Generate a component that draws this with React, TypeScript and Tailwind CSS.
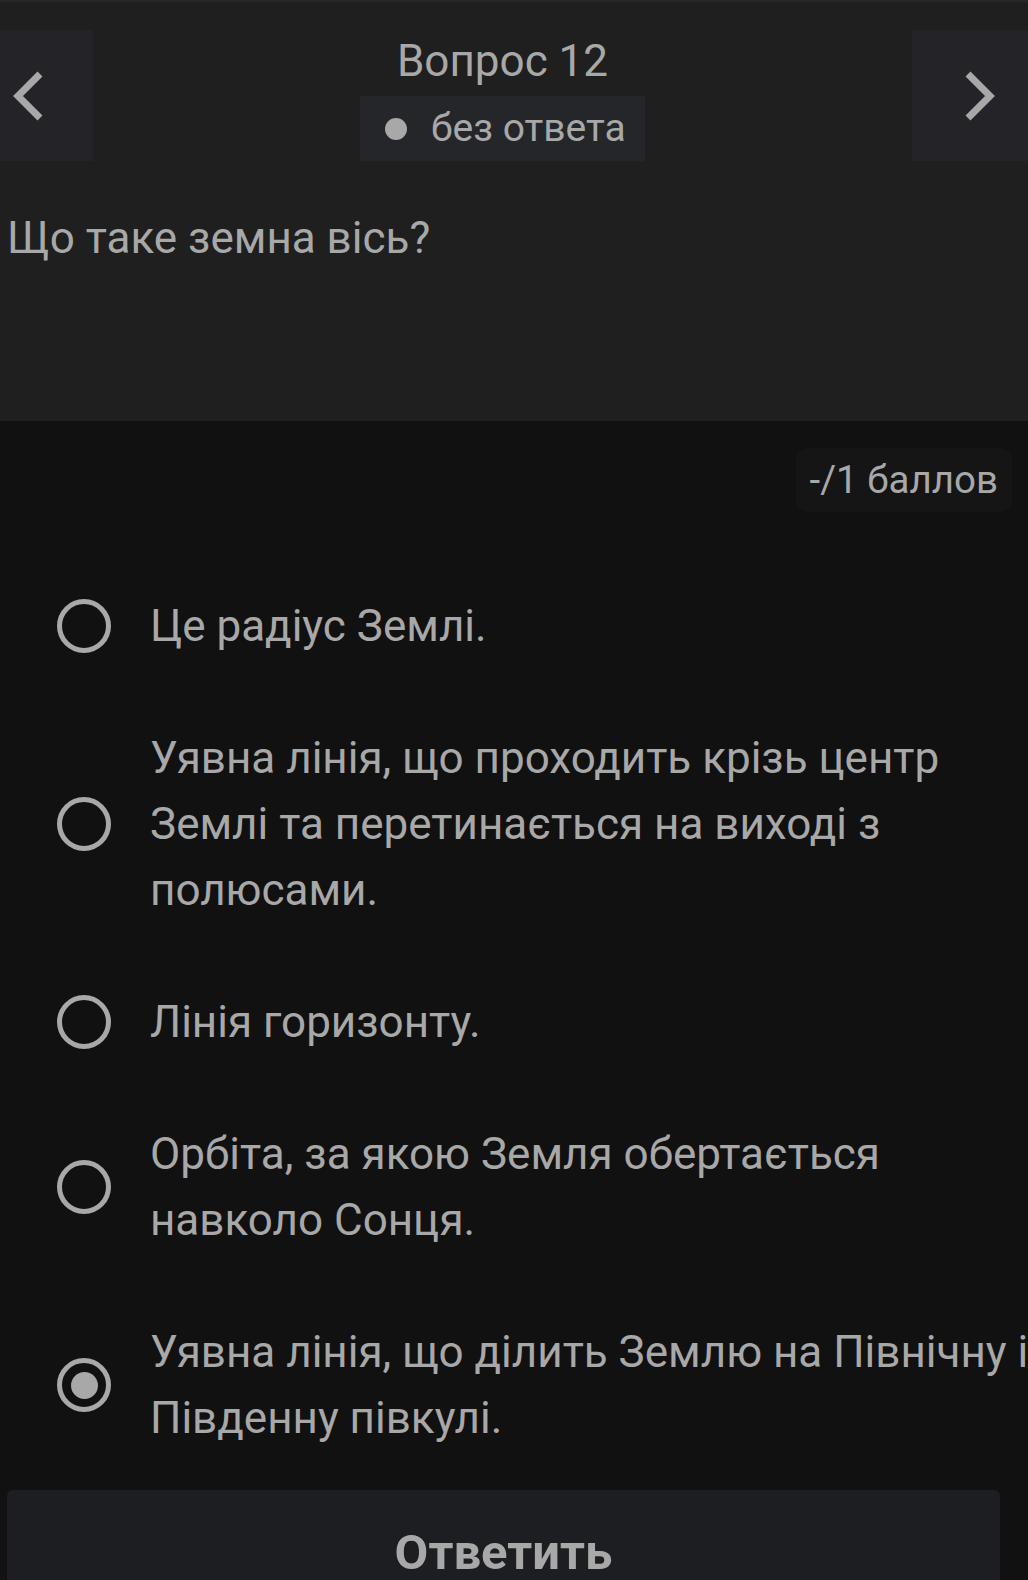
import { FC } from 'react';

interface IOption {
  text: string;
  checked?: boolean;
}

const options: IOption[] = [
  { text: 'Це радіус Землі.' },
  { text: 'Уявна лінія, що проходить крізь центр Землі та перетинається на виході з полюсами.' },
  { text: 'Лінія горизонту.' },
  { text: 'Орбіта, за якою Земля обертається навколо Сонця.' },
  { text: 'Уявна лінія, що ділить Землю на Північну і Південну півкулі.', checked: true },
];

const Chevron: FC<{ dir: 'left' | 'right' }> = ({ dir }) => (
  <svg width="36" height="52" viewBox="0 0 36 52" fill="none">
    <polyline
      points={dir === 'left' ? '30,4 8,26 30,48' : '6,4 28,26 6,48'}
      stroke="#a8a8a8"
      strokeWidth="7"
      strokeLinecap="butt"
      strokeLinejoin="miter"
    />
  </svg>
);

const Radio: FC<{ checked?: boolean }> = ({ checked }) => (
  <span className="flex h-[54px] w-[54px] shrink-0 items-center justify-center rounded-full border-[5px] border-[#a8a8a8]">
    {checked && <span className="h-[27px] w-[27px] rounded-full bg-[#a8a8a8]" />}
  </span>
);

const App: FC = () => {
  return (
    <div className="h-[1580px] w-[1028px] overflow-hidden bg-[#111111] font-['Roboto',sans-serif] text-[#a8a8a8]">
      {/* header */}
      <div className="h-[421px] border-t-2 border-[#282828] bg-[#1f1f1f]">
        <div className="mt-[28px] flex h-[131px]">
          <button className="flex w-[93px] items-center justify-start bg-[#232328] pl-[10px]">
            <Chevron dir="left" />
          </button>
          <div className="flex flex-1 flex-col items-center">
            <h2 className="mt-[6px] text-[44px] leading-[50px]">Вопрос 12</h2>
            <div className="mt-[10px] flex h-[65px] w-[285px] items-center bg-[#25262a] pl-[25px]">
              <span className="h-[22px] w-[22px] rounded-full bg-[#a8a8a8]" />
              <span className="ml-[24px] text-[39px] leading-none">без ответа</span>
            </div>
          </div>
          <button className="flex w-[116px] items-center justify-start bg-[#232328] pl-[50px]">
            <Chevron dir="right" />
          </button>
        </div>
        {/* question */}
        <p className="mt-[52px] pl-[7px] text-[44px] leading-[50px]">Що таке земна вісь?</p>
      </div>

      {/* body */}
      <div className="flex justify-end pr-[16px] pt-[27px]">
        <div className="flex h-[64px] items-center rounded-xl bg-[#151515] px-[14px] text-[38.5px]">
          -/1 баллов
        </div>
      </div>

      <div className="mt-[81px] flex flex-col gap-[66px]">
        {options.map((item, index) => (
          <label key={index} className="flex items-center pl-[57px]">
            <Radio checked={item.checked} />
            <span className="ml-[39px] w-[890px] shrink-0 text-[44px] leading-[66px]">{item.text}</span>
          </label>
        ))}
      </div>

      {/* submit */}
      <button className="ml-[7px] mt-[39px] flex h-[126px] w-[993px] items-center justify-center rounded-md bg-[#1d1e21] text-[49px] font-bold">
        Ответить
      </button>
    </div>
  );
};

export default App;
